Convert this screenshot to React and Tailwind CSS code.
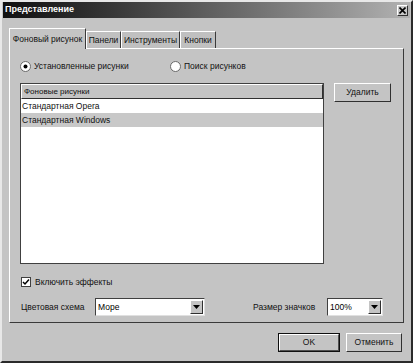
import React from "react";

const font = "font-['Liberation_Sans',Arial,sans-serif]";

const Radio = ({ checked }) => (
  <svg width="11" height="11" viewBox="0 0 11 11" className="shrink-0">
    <circle cx="5.5" cy="5.5" r="5" fill="#ffffff" stroke="#6a6a6a" strokeWidth="1" />
    {checked && <circle cx="5.5" cy="5.5" r="2" fill="#000000" />}
  </svg>
);

const Arrow = () => (
  <div className="w-[13px] h-full bg-[#c4c4c4] border border-t-white border-l-white border-r-[#303030] border-b-[#303030] flex items-center justify-center">
    <svg width="7" height="4" viewBox="0 0 7 4">
      <path d="M0 0 L7 0 L3.5 4 Z" fill="#000" />
    </svg>
  </div>
);

const Select = ({ value, w }) => (
  <div className={`${w} h-[18px] bg-white border border-t-[#404040] border-l-[#404040] border-r-[#e0e0e0] border-b-[#e0e0e0] flex items-stretch p-px`}>
    <span className="flex-1 pl-[1px] leading-[15px] text-black">{value}</span>
    <Arrow />
  </div>
);

const Button = ({ children, w, strong }) =>
  strong ? (
    <div className={`${w} h-[19px] border border-[#101010] flex`}>
      <div className="flex-1 flex items-center justify-center bg-[#c4c4c4] border border-t-white border-l-white border-r-[#505050] border-b-[#505050]">
        {children}
      </div>
    </div>
  ) : (
    <div
      className={`${w} h-[19px] flex items-center justify-center bg-[#c4c4c4] border border-t-white border-l-white border-r-[#303030] border-b-[#303030]`}
    >
      {children}
    </div>
  );

const Tab = ({ label, active, w }) => (
  <div
    className={`${w} flex items-center justify-center border-t border-l border-r border-t-white border-l-white border-r-[#3a3a3a] ${
      active ? "h-[21px] -mb-px z-10 bg-[#c4c4c4]" : "h-[17px] bg-[#c0c0c0]"
    }`}
  >
    {label}
  </div>
);

export default function App() {
  return (
    <div
      className={`${font} text-[8.5px] text-[#111] w-[413px] h-[363px] bg-[#c4c4c4] border-l-2 border-t-2 border-r-2 border-b-2 border-l-[#e8e8e8] border-t-[#e8e8e8] border-r-[#2a2a2a] border-b-[#2a2a2a] flex flex-col`}
    >
      {/* title bar */}
      <div className="h-[16px] mx-px bg-gradient-to-r from-[#101010] via-[#5e5e5e] to-[#b2b2b2] flex items-center justify-between pl-[2px] pr-[2px]">
        <span className="text-white font-bold text-[9px]">Представление</span>
        <div className="w-[11px] h-[11px] bg-[#c8c8c8] border border-t-white border-l-white border-r-[#303030] border-b-[#303030] flex items-center justify-center">
          <svg width="7" height="7" viewBox="0 0 7 7">
            <path d="M0.5 0.5 L6.5 6.5 M6.5 0.5 L0.5 6.5" stroke="#000" strokeWidth="1.6" />
          </svg>
        </div>
      </div>

      {/* tabs */}
      <div className="ml-[7px] mt-[9px] flex items-end h-[21px]">
        <Tab label="Фоновый рисунок" active w="w-[77px]" />
        <Tab label="Панели" w="w-[35px]" />
        <Tab label="Инструменты" w="w-[59px]" />
        <Tab label="Кнопки" w="w-[36px]" />
      </div>

      {/* panel */}
      <div className="ml-[7px] w-[395px] h-[275px] border border-t-white border-l-white border-r-[#3a3a3a] border-b-[#3a3a3a] flex flex-col pl-[10px] pt-[12px]">
        <div className="flex items-center h-[11px]">
          <div className="flex items-center gap-[3px] w-[150px]">
            <Radio checked />
            <span>Установленные рисунки</span>
          </div>
          <div className="flex items-center gap-[3px]">
            <Radio />
            <span>Поиск рисунков</span>
          </div>
        </div>

        <div className="flex items-start mt-[11px] gap-[10px]">
          <div className="w-[304px] h-[181px] bg-white border border-[#404040] flex flex-col">
            <div className="h-[15px] bg-[#c4c4c4] border border-t-white border-l-white border-r-[#303030] border-b-[#303030] flex items-center pl-[2px] text-[8px]">
              Фоновые рисунки
            </div>
            <div className="h-[14px] flex items-center pl-[1px]">Стандартная Opera</div>
            <div className="h-[14px] flex items-center pl-[1px] bg-[#c8c8c8]">Стандартная Windows</div>
          </div>
          <Button w="w-[57px]">Удалить</Button>
        </div>

        <div className="flex items-center gap-[4px] mt-[13px] h-[10px] ml-[1px]">
          <div className="w-[10px] h-[10px] bg-white border border-[#404040] flex items-center justify-center">
            <svg width="8" height="8" viewBox="0 0 8 8">
              <path d="M1 4 L3 6 L7 1.5" stroke="#000" strokeWidth="1.5" fill="none" />
            </svg>
          </div>
          <span>Включить эффекты</span>
        </div>

        <div className="flex items-center mt-[11px] ml-[1px]">
          <span className="w-[74px]">Цветовая схема</span>
          <Select value="Море" w="w-[110px]" />
          <span className="ml-[48px] w-[74px]">Размер значков</span>
          <Select value="100%" w="w-[56px]" />
        </div>
      </div>

      {/* buttons */}
      <div className="flex justify-end gap-[6px] mt-[10px] pr-[9px]">
        <Button w="w-[62px]" strong>OK</Button>
        <Button w="w-[56px]">Отменить</Button>
      </div>
    </div>
  );
}
